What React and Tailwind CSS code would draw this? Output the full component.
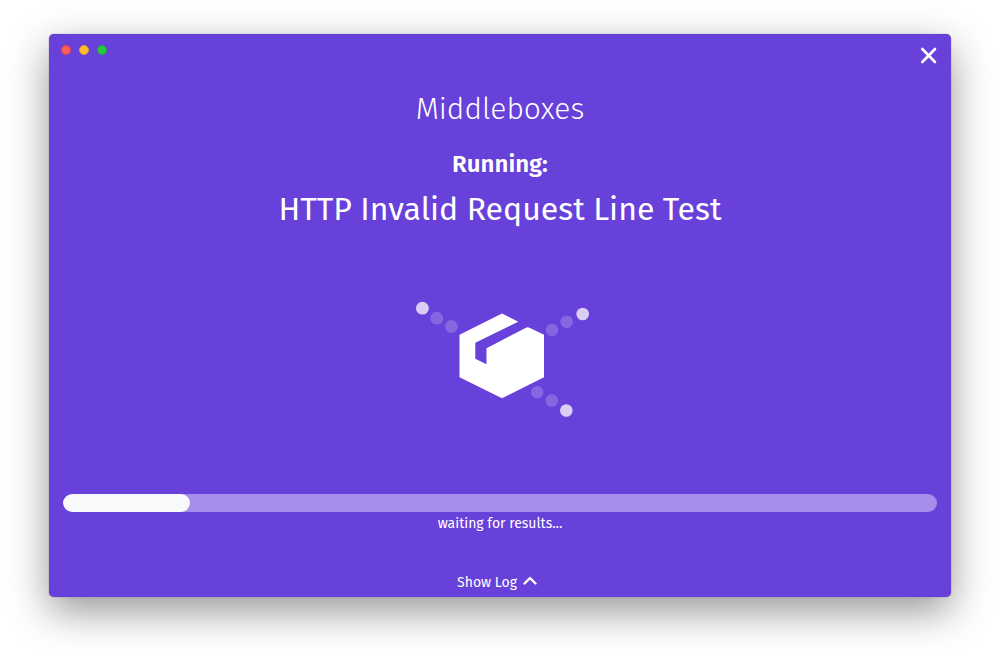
import React from "react";

const PROGRESS = 14.5;

function WindowControls() {
  return (
    <div className="flex gap-2 pt-[11px] pl-3">
      <button type="button" aria-label="Close window" className="size-[10px] rounded-full border border-[#e2463f] bg-[#ff5f57]" />
      <button type="button" aria-label="Minimize window" className="size-[10px] rounded-full border border-[#dfa023] bg-[#ffbd2e]" />
      <button type="button" aria-label="Zoom window" className="size-[10px] rounded-full border border-[#1dad2b] bg-[#28c940]" />
    </div>
  );
}

function BoxAnimation() {
  return (
    <svg viewBox="410 298 180 122" className="h-[122px] w-[180px]" aria-hidden="true">
      <g fill="#fff">
        <path d="M502 313.5L518.3 321.7L475.3 342.7V358.7L486.5 364.3V348.3L525.5 328Q527.7 326.5 530 328L544 334.7V377.3L502 398.2L459.5 377.3V334.7Z" />
        <g opacity="0.2">
          <circle cx="436.8" cy="318.2" r="6.4" />
          <circle cx="451.4" cy="326.5" r="6.4" />
          <circle cx="552" cy="330" r="6.2" />
          <circle cx="566.6" cy="321.8" r="6.3" />
          <circle cx="537.2" cy="392.3" r="6.2" />
          <circle cx="551.8" cy="400.5" r="6.3" />
        </g>
        <g opacity="0.75">
          <circle cx="422.4" cy="308.2" r="6.4" />
          <circle cx="582.7" cy="314" r="6.3" />
          <circle cx="566.3" cy="410.5" r="6.3" />
        </g>
      </g>
    </svg>
  );
}

export default function App() {
  return (
    <div className="flex min-h-screen bg-white px-[49px] pt-[34px] pb-[65px] font-['Fira_Sans','Noto_Sans',sans-serif] text-white">
      <main className="flex flex-1 flex-col rounded-[5px] bg-[#6840da] shadow-[0_0_1px_rgba(0,0,0,0.6),0_14px_40px_rgba(0,0,0,0.42)]">
        <header className="flex items-start justify-between">
          <WindowControls />
          <button type="button" aria-label="Close" className="p-3">
            <svg viewBox="0 0 20 20" className="size-5" fill="none" stroke="currentColor" strokeWidth="2.6" strokeLinecap="round" aria-hidden="true">
              <path d="M3.3 3L16 16M16 3L3.3 16" />
            </svg>
          </button>
        </header>

        <section className="flex flex-1 flex-col items-center pt-2 text-center">
          <h1 className="text-3xl leading-[46px] font-light">Middleboxes</h1>
          <h2 className="mt-4 text-2xl leading-8 font-semibold">Running:</h2>
          <p className="mt-1 text-[32px] leading-[50px]">HTTP Invalid Request Line Test</p>
          <div className="flex flex-1 items-center justify-center pb-[11px]">
            <BoxAnimation />
          </div>
        </section>

        <footer className="flex flex-col items-center px-[14px] pb-1 text-sm leading-5">
          <div
            role="progressbar"
            aria-label="Test progress"
            aria-valuenow={PROGRESS}
            aria-valuemin={0}
            aria-valuemax={100}
            className="h-[18px] w-full overflow-hidden rounded-full bg-[#a68de9]"
          >
            <div className="h-full rounded-full bg-[#f8f9fa]" style={{ width: `${PROGRESS}%` }} />
          </div>
          <p className="mt-[2px]">waiting for results...</p>
          <button type="button" className="mt-[39px] mr-[6px] flex items-center gap-1">
            Show Log
            <svg viewBox="0 0 16 16" className="size-4" fill="none" stroke="currentColor" strokeWidth="2.4" strokeLinecap="round" strokeLinejoin="round" aria-hidden="true">
              <path d="M3.5 8.5L9 3L14.5 8.5" />
            </svg>
          </button>
        </footer>
      </main>
    </div>
  );
}
